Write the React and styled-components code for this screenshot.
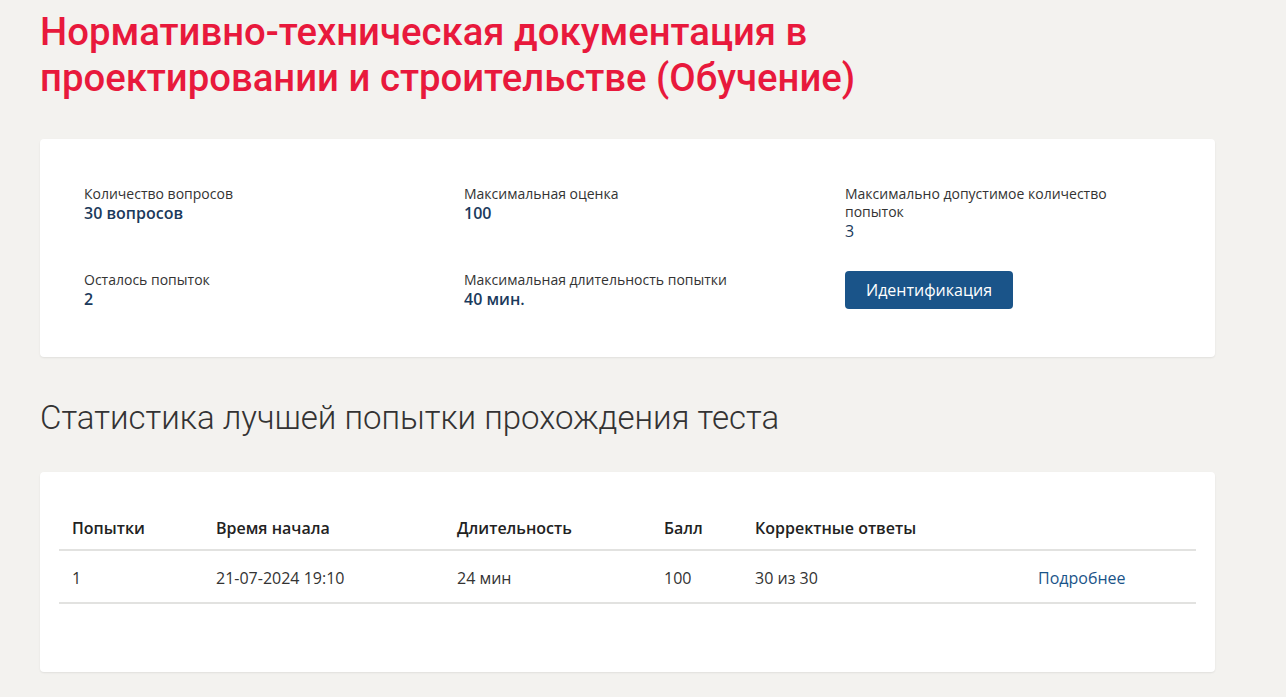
import styled, { createGlobalStyle } from "styled-components";

const GlobalStyle = createGlobalStyle`
  html, body {
    margin: 0;
    padding: 0;
    background: #f3f2ef;
    font-family: "Open Sans", "Noto Sans", sans-serif;
    color: #333;
  }
  * { box-sizing: border-box; }
`;

const Page = styled.div`
  width: 1286px;
  padding: 9px 71px 40px 40px;
`;

const Title = styled.h1`
  margin: 0;
  max-width: 880px;
  font-family: Roboto, "Noto Sans", sans-serif;
  font-weight: 500;
  font-size: 38.3px;
  line-height: 46px;
  color: #e8193c;
`;

const Card = styled.section`
  background: #fff;
  border-radius: 4px;
  box-shadow: 0 1px 2px rgba(0, 0, 0, 0.08);
  margin-top: ${(p) => p.$top || 0}px;
  padding: ${(p) => p.$pad};
  min-height: ${(p) => p.$height}px;
`;

const InfoGrid = styled.div`
  display: grid;
  grid-template-columns: 380px 381px 1fr;
  row-gap: 30px;
`;

const Field = styled.div`
  display: flex;
  flex-direction: column;
  padding-right: 30px;
`;

const Label = styled.span`
  font-size: 14px;
  line-height: 18px;
  color: #333;
`;

const Value = styled.span`
  font-size: 16px;
  line-height: 20px;
  font-weight: ${(p) => (p.$light ? 400 : 600)};
  color: #1b3a5c;
`;

const Button = styled.button`
  justify-self: start;
  align-self: start;
  margin-top: 0;
  height: 38px;
  padding: 0 21px;
  border: none;
  border-radius: 4px;
  background: #1a5489;
  color: #fff;
  font-family: "Open Sans", "Noto Sans", sans-serif;
  font-size: 16px;
  cursor: pointer;
`;

const Subtitle = styled.h2`
  margin: 42px 0 0;
  font-family: Roboto, "Noto Sans", sans-serif;
  font-weight: 300;
  font-size: 33px;
  line-height: 38px;
  color: #333;
`;

const Table = styled.table`
  width: 100%;
  border-collapse: collapse;
  font-size: 16px;
`;

const Th = styled.th`
  text-align: left;
  font-weight: 600;
  color: #222;
  padding: 0 13px 10px;
  height: 42px;
  vertical-align: bottom;
  border-bottom: 2px solid #e2e2e0;
  width: ${(p) => p.$w}px;
`;

const Td = styled.td`
  padding: 2px 13px 0;
  height: 53px;
  color: ${(p) => (p.$link ? "#1a5489" : "#333")};
  border-bottom: 2px solid #e2e2e0;
`;

const info = [
  { label: "Количество вопросов", value: "30 вопросов" },
  { label: "Максимальная оценка", value: "100" },
  { label: "Максимально допустимое количество попыток", value: "3", light: true },
  { label: "Осталось попыток", value: "2" },
  { label: "Максимальная длительность попытки", value: "40 мин." },
];

const cols = [
  { name: "Попытки", w: 144 },
  { name: "Время начала", w: 241 },
  { name: "Длительность", w: 207 },
  { name: "Балл", w: 91 },
  { name: "Корректные ответы", w: 283 },
  { name: "", w: 171 },
];

const row = ["1", "21-07-2024 19:10", "24 мин", "100", "30 из 30"];

export default function App() {
  return (
    <>
      <GlobalStyle />
      <Page>
        <Title>Нормативно-техническая документация в проектировании и строительстве (Обучение)</Title>

        <Card $top={38} $pad="46px 44px 46px 44px" $height={218}>
          <InfoGrid>
            {info.map((f) => (
              <Field key={f.label}>
                <Label>{f.label}</Label>
                <Value $light={f.light}>{f.value}</Value>
              </Field>
            ))}
            <Button>Идентификация</Button>
          </InfoGrid>
        </Card>

        <Subtitle>Статистика лучшей попытки прохождения теста</Subtitle>

        <Card $top={35} $pad="36px 19px 40px 19px" $height={200}>
          <Table>
            <thead>
              <tr>
                {cols.map((c) => (
                  <Th key={c.w} $w={c.w}>{c.name}</Th>
                ))}
              </tr>
            </thead>
            <tbody>
              <tr>
                {row.map((v) => (
                  <Td key={v}>{v}</Td>
                ))}
                <Td $link>Подробнее</Td>
              </tr>
            </tbody>
          </Table>
        </Card>
      </Page>
    </>
  );
}
